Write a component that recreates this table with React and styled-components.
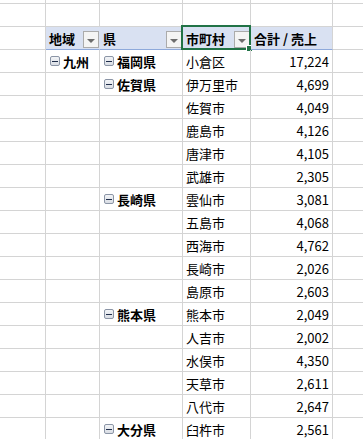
import styled, { createGlobalStyle } from "styled-components";

const GlobalStyle = createGlobalStyle`
  html, body {
    margin: 0;
    padding: 0;
    background: #ffffff;
  }
  body {
    font-family: "Noto Sans CJK JP", "Noto Sans", sans-serif;
    color: #000000;
  }
`;

const Sheet = styled.div`
  width: 363px;
  height: 439px;
  overflow: hidden;
  display: grid;
  grid-template-columns: 46px 54px 83px 68px 82px 60px;
  grid-template-rows: 4px repeat(19, 23px);
`;

const Cell = styled.div`
  position: relative;
  box-sizing: border-box;
  display: flex;
  align-items: center;
  justify-content: ${(p) => (p.$right ? "flex-end" : "flex-start")};
  gap: 3px;
  padding: ${(p) => (p.$right ? "0 3px 0 0" : p.$icon ? "0 0 0 4px" : "0 0 0 3px")};
  border-right: 1px solid #d4d4d4;
  border-bottom: 1px solid #d4d4d4;
  font-size: 13px;
  font-weight: ${(p) => (p.$bold ? 700 : 400)};
  white-space: nowrap;
  overflow: visible;
`;

const HeadCell = styled(Cell)`
  background: #d9e1f2;
  border-right-color: ${(p) => (p.$last ? "#d4d4d4" : "#d9e1f2")};
  border-bottom-color: #8ea9db;
  font-weight: 700;
  padding-left: 3px;
`;

const FilterButton = styled.span`
  position: absolute;
  right: 0;
  bottom: 1px;
  width: 16px;
  height: 17px;
  box-sizing: border-box;
  border: 1px solid #ababab;
  background: #f4f4f4;
  display: flex;
  align-items: center;
  justify-content: center;
  &::after {
    content: "";
    margin-top: 2px;
    border-left: 4px solid transparent;
    border-right: 4px solid transparent;
    border-top: 4px solid #6d6d6d;
  }
`;

const Selection = styled.span`
  position: absolute;
  left: -2px;
  top: -2px;
  right: -1px;
  bottom: -1px;
  border: 2px solid #217346;
  pointer-events: none;
  &::after {
    content: "";
    position: absolute;
    right: -4px;
    bottom: -4px;
    width: 5px;
    height: 5px;
    background: #217346;
    border: 1px solid #ffffff;
  }
`;

const Collapse = styled.span`
  flex: none;
  width: 10px;
  height: 10px;
  box-sizing: border-box;
  border: 1px solid #8b95a6;
  border-radius: 2px;
  background: linear-gradient(#f2f4f7, #d9dde4);
  display: flex;
  align-items: center;
  justify-content: center;
  &::after {
    content: "";
    width: 6px;
    height: 1px;
    background: #1f2d4a;
  }
`;

const rows = [
  ["九州", "福岡県", "小倉区", "17,224"],
  ["", "佐賀県", "伊万里市", "4,699"],
  ["", "", "佐賀市", "4,049"],
  ["", "", "鹿島市", "4,126"],
  ["", "", "唐津市", "4,105"],
  ["", "", "武雄市", "2,305"],
  ["", "長崎県", "雲仙市", "3,081"],
  ["", "", "五島市", "4,068"],
  ["", "", "西海市", "4,762"],
  ["", "", "長崎市", "2,026"],
  ["", "", "島原市", "2,603"],
  ["", "熊本県", "熊本市", "2,049"],
  ["", "", "人吉市", "2,002"],
  ["", "", "水俣市", "4,350"],
  ["", "", "天草市", "2,611"],
  ["", "", "八代市", "2,647"],
  ["", "大分県", "臼杵市", "2,561"],
];

function Group({ label }) {
  if (!label) return <Cell />;
  return (
    <Cell $bold $icon>
      <Collapse />
      {label}
    </Cell>
  );
}

export default function App() {
  return (
    <>
      <GlobalStyle />
      <Sheet>
        {[0, 1, 2, 3, 4, 5].map((i) => (
          <Cell key={"t" + i} />
        ))}
        {[0, 1, 2, 3, 4, 5].map((i) => (
          <Cell key={"e" + i} />
        ))}

        <Cell />
        <HeadCell>
          地域
          <FilterButton />
        </HeadCell>
        <HeadCell>
          県
          <FilterButton />
        </HeadCell>
        <HeadCell>
          市町村
          <FilterButton />
          <Selection />
        </HeadCell>
        <HeadCell $last>合計 / 売上</HeadCell>
        <Cell />

        {rows.map((r, i) => (
          <Row key={i} data={r} />
        ))}
      </Sheet>
    </>
  );
}

function Row({ data }) {
  const [area, pref, city, total] = data;
  return (
    <>
      <Cell />
      <Group label={area} />
      <Group label={pref} />
      <Cell>{city}</Cell>
      <Cell $right>{total}</Cell>
      <Cell />
    </>
  );
}
